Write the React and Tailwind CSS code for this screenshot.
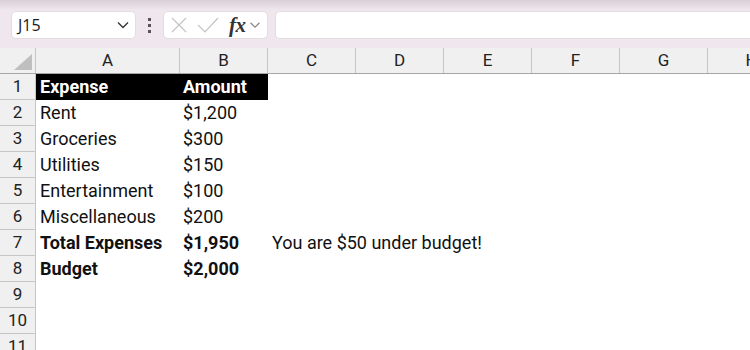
import React from 'react';

const cols = [
    { key: 'A', w: 'w-[144px]' },
    { key: 'B', w: 'w-[88px]' },
    { key: 'C', w: 'w-[88px]' },
    { key: 'D', w: 'w-[88px]' },
    { key: 'E', w: 'w-[88px]' },
    { key: 'F', w: 'w-[88px]' },
    { key: 'G', w: 'w-[88px]' },
    { key: 'H', w: 'w-[88px]' },
];

const rows = [
    { n: 1, a: 'Expense', b: 'Amount', head: true },
    { n: 2, a: 'Rent', b: '$1,200' },
    { n: 3, a: 'Groceries', b: '$300' },
    { n: 4, a: 'Utilities', b: '$150' },
    { n: 5, a: 'Entertainment', b: '$100' },
    { n: 6, a: 'Miscellaneous', b: '$200' },
    { n: 7, a: 'Total Expenses', b: '$1,950', bold: true, c: 'You are $50 under budget!' },
    { n: 8, a: 'Budget', b: '$2,000', bold: true },
    { n: 9 },
    { n: 10 },
    { n: 11 },
];

function Chevron({ className }) {
    return (
        <svg width="12" height="8" viewBox="0 0 12 8" className={className}>
            <path d="M1 1.5 L6 6.5 L11 1.5" fill="none" stroke="currentColor" strokeWidth="1.3" />
        </svg>
    );
}

function FormulaBar() {
    return (
        <div className="h-[48px] flex items-start pt-[11px] bg-[#efe7ed] relative">
            <div className="absolute top-0 left-0 right-0 h-[10px] bg-gradient-to-b from-[#d9cfd6] to-[#efe7ed]" />
            <div className="relative ml-[11px] w-[125px] h-[28px] bg-white rounded-[5px] border border-[#e3dde1] flex items-center pl-[6px] pr-[6px]">
                <span className="text-[16px] text-[#1a1a1a] font-['Open_Sans',sans-serif] flex-1">J15</span>
                <Chevron className="text-[#333]" />
            </div>
            <div className="relative w-[27px] h-[28px] flex flex-col items-center justify-center gap-[3px]">
                <span className="w-[3px] h-[3px] bg-[#555]" />
                <span className="w-[3px] h-[3px] bg-[#555]" />
                <span className="w-[3px] h-[3px] bg-[#555]" />
            </div>
            <div className="relative w-[105px] h-[28px] bg-white rounded-[5px] border border-[#e3dde1] flex items-center pl-[6px]">
                <svg width="18" height="18" viewBox="0 0 18 18">
                    <path d="M2 2 L16 16 M16 2 L2 16" stroke="#c4c4c4" strokeWidth="1.2" fill="none" />
                </svg>
                <svg width="22" height="18" viewBox="0 0 22 18" className="ml-[9px]">
                    <path d="M1 9 L8 16 L21 2" stroke="#c4c4c4" strokeWidth="1.2" fill="none" />
                </svg>
                <span className="ml-[10px] text-[21px] leading-none italic font-semibold text-[#333] font-['Liberation_Serif',serif] tracking-[-0.5px]">fx</span>
                <Chevron className="ml-[3px] text-[#888] scale-90" />
            </div>
            <div className="relative ml-[7px] flex-1 h-[28px] bg-white rounded-l-[5px] border border-r-0 border-[#e3dde1]" />
        </div>
    );
}

function HeaderRow() {
    return (
        <div className="flex h-[26px] bg-[#f0f0f0] border-b border-[#a6a6a6]">
            <div className="w-[36px] shrink-0 border-r border-[#c6c6c6] relative">
                <svg width="18" height="16" viewBox="0 0 18 16" className="absolute right-[3px] bottom-[3px]">
                    <path d="M18 0 L18 16 L0 16 Z" fill="#bfbfbf" />
                </svg>
            </div>
            {cols.map(c => (
                <div key={c.key} className={`${c.w} shrink-0 border-r border-[#c6c6c6] flex items-center justify-center text-[17px] text-[#222]`}>
                    {c.key}
                </div>
            ))}
        </div>
    );
}

function Row({ r }) {
    const weight = r.head || r.bold ? 'font-bold' : '';
    const fill = r.head ? 'bg-black text-white' : 'text-[#111]';
    return (
        <div className="flex h-[26px]">
            <div className="w-[36px] shrink-0 bg-[#f0f0f0] border-r border-b border-[#c6c6c6] flex items-center justify-center text-[17px] text-[#222]">
                {r.n}
            </div>
            <div className={`w-[144px] shrink-0 flex items-center pl-[4px] pb-[2px] text-[18px] ${weight} ${fill}`}>
                {r.a}
            </div>
            <div className={`w-[88px] shrink-0 flex items-center pl-[3px] pb-[2px] text-[18px] ${weight} ${fill}`}>
                {r.b}
            </div>
            <div className="flex-1 flex items-center pl-[4px] pb-[2px] text-[18px] text-[#111] whitespace-nowrap">
                {r.c}
            </div>
        </div>
    );
}

export default function App() {
    return (
        <div className="w-[750px] h-[350px] overflow-hidden bg-white font-['Roboto',sans-serif]">
            <FormulaBar />
            <HeaderRow />
            {rows.map(r => <Row key={r.n} r={r} />)}
        </div>
    );
}
